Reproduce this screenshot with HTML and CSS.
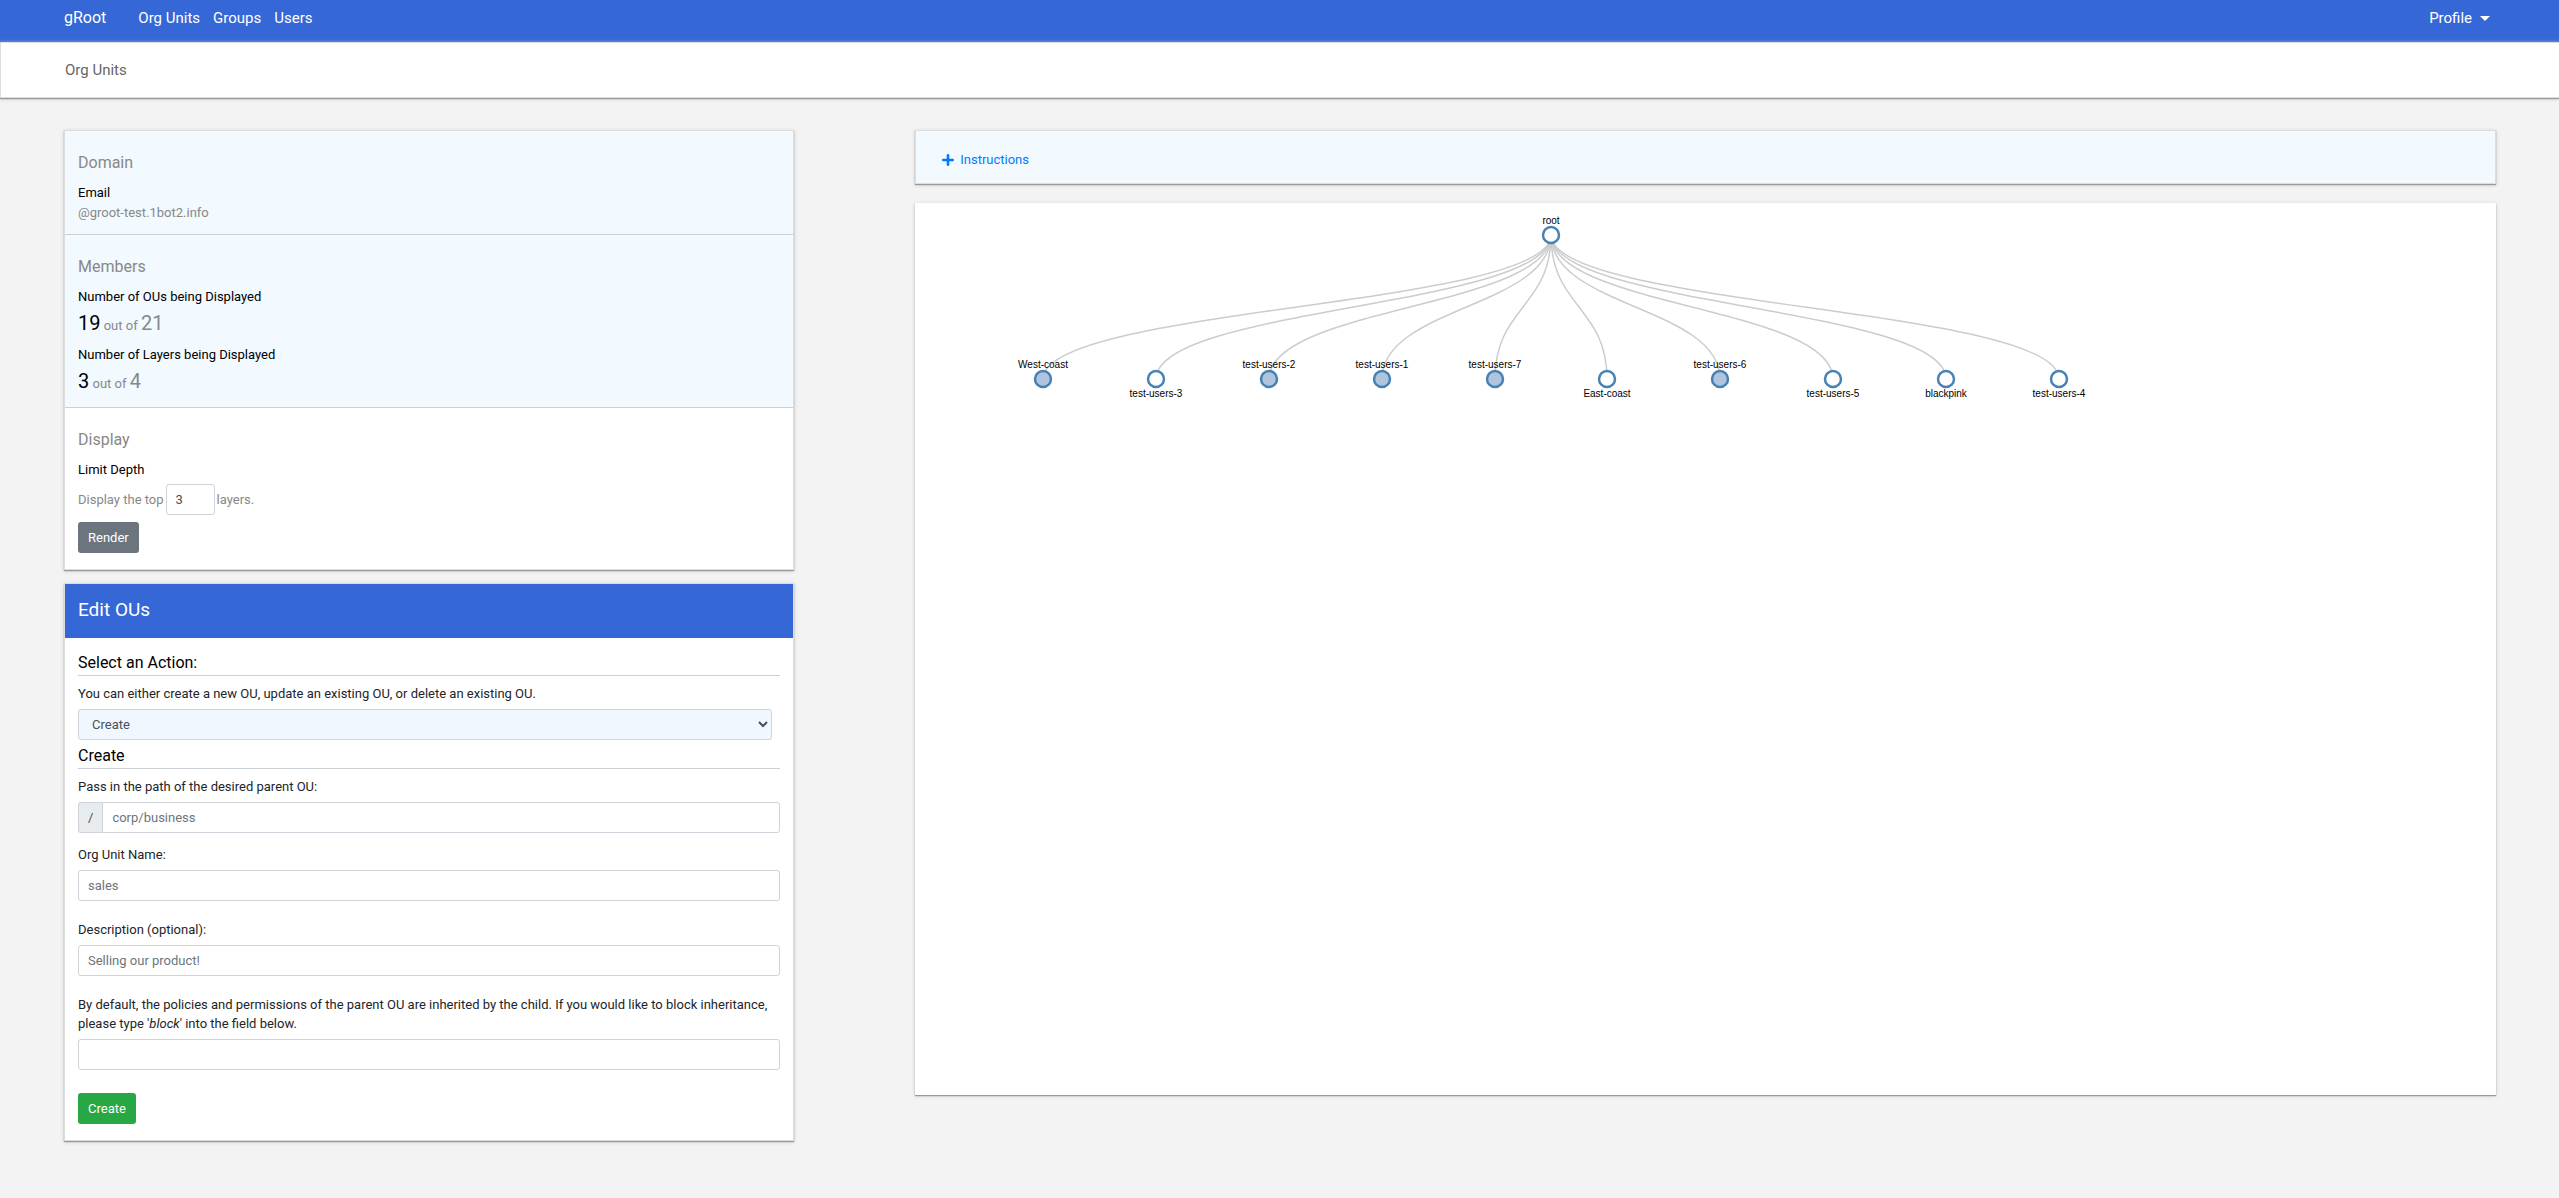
FILE: index.html
```html
<!DOCTYPE html>
<html lang="en">
<head>
<meta charset="utf-8">
<meta name="viewport" content="width=device-width, initial-scale=1">
<title>gRoot - Org Units</title>
<link rel="stylesheet" href="styles.css">
</head>
<body>
<nav class="navbar">
  <a class="brand" href="#">gRoot</a>
  <a class="nav-link" href="#">Org Units</a>
  <a class="nav-link" href="#">Groups</a>
  <a class="nav-link" href="#">Users</a>
  <button class="profile" type="button">Profile <span class="caret"></span></button>
</nav>
<header class="subheader">Org Units</header>
<main class="content">
  <div class="sidebar">
    <section class="card">
      <div class="panel tinted">
        <h2 class="panel-title">Domain</h2>
        <div class="strong">Email</div>
        <div class="muted">@groot-test.1bot2.info</div>
      </div>
      <div class="panel panel-members tinted">
        <h2 class="panel-title">Members</h2>
        <div class="strong">Number of OUs being Displayed</div>
        <div class="stat"><span class="count">19</span> out of <span class="total">21</span></div>
        <div class="strong">Number of Layers being Displayed</div>
        <div class="stat"><span class="count">3</span> out of <span class="total">4</span></div>
      </div>
      <form class="panel panel-display">
        <h2 class="panel-title">Display</h2>
        <div class="strong">Limit Depth</div>
        <div class="depth">
          <label for="depth">Display the top</label>
          <input class="field depth-input" id="depth" type="text" value="3">
          <span>layers.</span>
        </div>
        <button class="btn btn-gray" type="button">Render</button>
      </form>
    </section>
    <section class="card">
      <h1 class="card-header">Edit OUs</h1>
      <form class="form">
        <h2 class="form-title">Select an Action:</h2>
        <label class="label" for="action">You can either create a new OU, update an existing OU, or delete an existing OU.</label>
        <select class="field select" id="action">
          <option>Create</option>
          <option>Update</option>
          <option>Delete</option>
        </select>
        <h2 class="form-title">Create</h2>
        <label class="label" for="parent">Pass in the path of the desired parent OU:</label>
        <div class="input-group">
          <span class="addon">/</span>
          <input class="field" id="parent" type="text" placeholder="corp/business">
        </div>
        <label class="label" for="name">Org Unit Name:</label>
        <input class="field spaced" id="name" type="text" placeholder="sales">
        <label class="label" for="description">Description (optional):</label>
        <input class="field spaced" id="description" type="text" placeholder="Selling our product!">
        <label class="label" for="block">By default, the policies and permissions of the parent OU are inherited by the child. If you would like to block inheritance, please type '<em>block</em>' into the field below.</label>
        <input class="field spaced" id="block" type="text">
        <button class="btn btn-green" type="button">Create</button>
      </form>
    </section>
  </div>
  <div class="main">
    <section class="card instructions">
      <a class="toggle" href="#">
        <svg class="plus" width="12" height="12" viewBox="0 0 12 12" aria-hidden="true"><path d="M6 1.3v9.4M1.3 6h9.4"/></svg>
        Instructions
      </a>
    </section>
    <section class="chart">
      <svg class="tree" role="img" aria-label="Org unit tree">
        <g class="links">
          <path d="M128 176C128 104 636 104 636 32"/>
          <path d="M241 176C241 104 636 104 636 32"/>
          <path d="M354 176C354 104 636 104 636 32"/>
          <path d="M467 176C467 104 636 104 636 32"/>
          <path d="M580 176C580 104 636 104 636 32"/>
          <path d="M692 176C692 104 636 104 636 32"/>
          <path d="M805 176C805 104 636 104 636 32"/>
          <path d="M918 176C918 104 636 104 636 32"/>
          <path d="M1031 176C1031 104 636 104 636 32"/>
          <path d="M1144 176C1144 104 636 104 636 32"/>
        </g>
        <g class="nodes">
          <circle cx="636" cy="32" r="8"/><text x="636" y="21">root</text>
          <circle class="parent" cx="128" cy="176" r="8"/><text x="128" y="165">West-coast</text>
          <circle cx="241" cy="176" r="8"/><text x="241" y="194">test-users-3</text>
          <circle class="parent" cx="354" cy="176" r="8"/><text x="354" y="165">test-users-2</text>
          <circle class="parent" cx="467" cy="176" r="8"/><text x="467" y="165">test-users-1</text>
          <circle class="parent" cx="580" cy="176" r="8"/><text x="580" y="165">test-users-7</text>
          <circle cx="692" cy="176" r="8"/><text x="692" y="194">East-coast</text>
          <circle class="parent" cx="805" cy="176" r="8"/><text x="805" y="165">test-users-6</text>
          <circle cx="918" cy="176" r="8"/><text x="918" y="194">test-users-5</text>
          <circle cx="1031" cy="176" r="8"/><text x="1031" y="194">blackpink</text>
          <circle cx="1144" cy="176" r="8"/><text x="1144" y="194">test-users-4</text>
        </g>
      </svg>
    </section>
  </div>
</main>
</body>
</html>
```
FILE: styles.css
```css
* {
  box-sizing: border-box;
}

body {
  margin: 0;
  background: #f3f3f3;
  color: #212529;
  font: 13px/19px Roboto, "Liberation Sans", sans-serif;
}

h1,
h2 {
  margin: 0;
  font-weight: 400;
}

.navbar {
  display: flex;
  gap: 13px;
  padding: 6px 69px 12px 64px;
  background: #3667d6;
  font-size: 15px;
  line-height: 24px;
}

.brand,
.nav-link,
.profile {
  color: #fff;
  text-decoration: none;
}

.brand {
  margin-right: 19px;
  font-size: 16px;
}

.profile {
  display: flex;
  align-items: center;
  gap: 8px;
  margin-left: auto;
  padding: 0;
  border: 0;
  background: none;
  font: inherit;
}

.caret {
  border: 5px solid transparent;
  border-top-color: #fff;
  border-bottom: 0;
}

.subheader {
  padding: 16px 64px;
  border: 1px solid #ddd;
  border-right: 0;
  background: #fff;
  box-shadow: 0 1px 1px #999, 0 1px 4px #ccc;
  color: #666;
  font-size: 15px;
  line-height: 22px;
}

.content {
  display: flex;
  justify-content: space-between;
  align-items: flex-start;
  padding: 32px 63px 56px 64px;
}

.sidebar {
  display: flex;
  flex-direction: column;
  gap: 13px;
  width: 30%;
}

.main {
  display: flex;
  flex-direction: column;
  gap: 19px;
  width: 65%;
}

.card,
.chart {
  background: #fff;
  box-shadow: 0 1px 1px #999, 0 1px 4px #ccc;
}

.card {
  border: 1px solid #ddd;
}

.panel {
  padding: 20px 13px 12px;
}

.panel + .panel {
  border-top: 1px solid #ccd0d4;
}

.tinted,
.instructions {
  background: #f2f9ff;
}

.panel-title {
  margin-bottom: 8px;
  color: #888;
  font-size: 16px;
  line-height: 24px;
}

.strong {
  color: #000;
  line-height: 20px;
}

.muted,
.stat,
.depth {
  color: #888;
}

.stat {
  padding-top: 4px;
  line-height: 26px;
}

.stat + .strong {
  margin-top: 6px;
}

.count,
.total {
  font-size: 20px;
  line-height: 24px;
}

.count {
  color: #000;
}

.depth {
  display: flex;
  align-items: center;
  gap: 2px;
  margin: 4px 0 7px;
}

.field {
  display: block;
  width: 100%;
  height: 31px;
  padding: 4px 9px;
  border: 1px solid #ced4da;
  border-radius: 3px;
  background: #fff;
  color: #495057;
  font: inherit;
}

.field::placeholder {
  color: #6c757d;
}

.depth-input {
  width: 49px;
}

.btn {
  display: block;
  padding: 5px 10px;
  border: 0;
  border-radius: 3px;
  color: #fff;
  font: inherit;
  line-height: 21px;
}

.btn-gray {
  background: #6c757d;
}

.btn-green {
  margin-top: 23px;
  background: #28a745;
}

.panel-members {
  padding-bottom: 10px;
}

.panel-display {
  padding-bottom: 16px;
}

.card-header {
  padding: 12px 13px 14px;
  background: #3667d6;
  color: #fff;
  font-size: 19px;
  line-height: 28px;
}

.form {
  padding: 13px 13px 16px;
}

.form-title {
  margin-bottom: 8px;
  padding-bottom: 1px;
  border-bottom: 1px solid #ccd0d4;
  color: #000;
  font-size: 16px;
  line-height: 23px;
}

.label {
  display: block;
  margin-bottom: 6px;
}

.select {
  width: calc(100% - 8px);
  margin-bottom: 4px;
  background: #f0f7ff;
}

.input-group {
  display: flex;
  margin-bottom: 12px;
}

.input-group .field {
  border-radius: 0 3px 3px 0;
}

.addon {
  padding: 5px 9px;
  border: 1px solid #ced4da;
  border-right: 0;
  border-radius: 3px 0 0 3px;
  background: #e9ecef;
  color: #495057;
}

.spaced {
  margin-bottom: 19px;
}

.instructions {
  padding: 19px 26px 14px;
}

.toggle {
  display: flex;
  align-items: center;
  gap: 6px;
  color: #007bff;
  text-decoration: none;
}

.plus {
  fill: none;
  stroke: #007bff;
  stroke-width: 2.6;
  stroke-linecap: round;
}

.tree {
  display: block;
  width: 100%;
  height: calc(100vh - 306px);
}

.links {
  fill: none;
  stroke: #ccc;
  stroke-width: 1.5;
}

.nodes circle {
  fill: #fff;
  stroke: steelblue;
  stroke-width: 2.5;
}

.nodes .parent {
  fill: lightsteelblue;
}

.nodes text {
  fill: #000;
  font: 10px "Liberation Sans", sans-serif;
  text-anchor: middle;
}
```
